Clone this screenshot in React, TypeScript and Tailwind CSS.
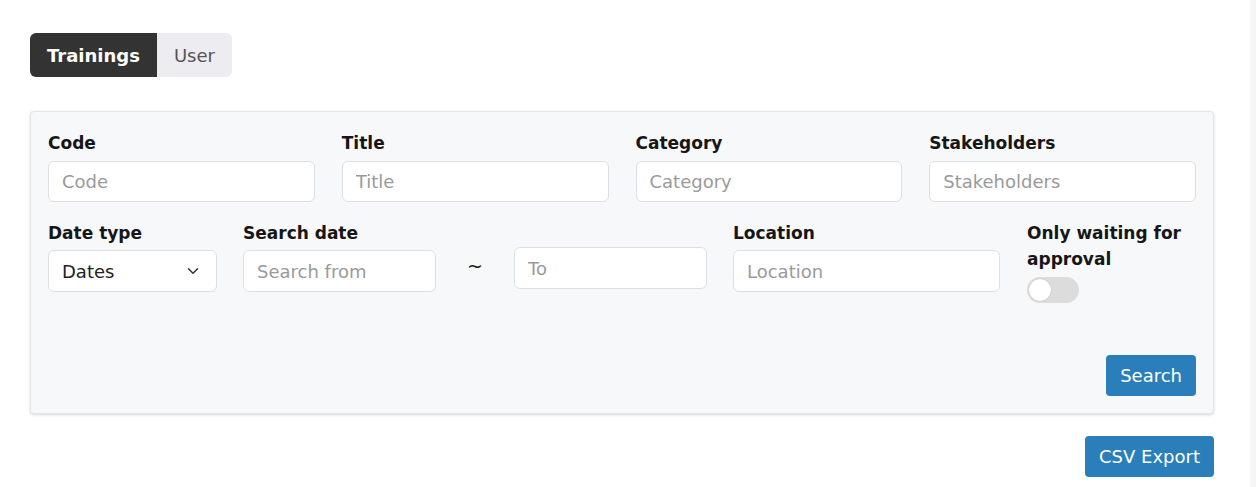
import React from "react";
import { ChevronDown } from "lucide-react";

const font = { fontFamily: '"DejaVu Sans", Verdana, sans-serif' };

function Field({ label, placeholder }: { label: string; placeholder: string }) {
  return (
    <div className="flex flex-col">
      <label className="text-[17px] font-bold leading-[26px] text-[#161616]">{label}</label>
      <input
        placeholder={placeholder}
        className="mt-[5px] h-[41px] w-full rounded-[6px] border border-[#dcdfe4] bg-white px-[13px] text-[18px] text-[#333] placeholder:text-[#9a9a9a] outline-none"
      />
    </div>
  );
}

export default function App() {
  return (
    <div className="flex min-h-[487px] bg-white" style={font}>
      <div className="flex-1 pl-[30px] pr-[36px] pt-[33px]">
        <div className="inline-flex h-[44px] overflow-hidden rounded-[6px]">
          <button className="bg-[#333333] px-[17px] text-[18px] font-bold text-white">Trainings</button>
          <button className="bg-[#ececf1] px-[17px] text-[18px] text-[#555]">User</button>
        </div>

        <div className="mt-[34px] rounded-[4px] border border-[#e3e5e9] bg-[#f7f8fa] px-[17px] pb-[17px] pt-[18px] shadow-[0_1px_3px_rgba(0,0,0,0.15)]">
          <div className="grid grid-cols-4 gap-x-[27px]">
            <Field label="Code" placeholder="Code" />
            <Field label="Title" placeholder="Title" />
            <Field label="Category" placeholder="Category" />
            <Field label="Stakeholders" placeholder="Stakeholders" />
          </div>

          <div className="mt-[18px] flex items-start">
            <div className="flex w-[169px] flex-col">
              <label className="text-[17px] font-bold leading-[26px] text-[#161616]">Date type</label>
              <div className="mt-[4px] flex h-[42px] items-center justify-between rounded-[6px] border border-[#dcdfe4] bg-white pl-[13px] pr-[14px]">
                <span className="text-[18px] text-[#222]">Dates</span>
                <ChevronDown size={18} strokeWidth={2} className="text-[#333]" />
              </div>
            </div>
            <div className="ml-[26px] flex w-[193px] flex-col">
              <label className="text-[17px] font-bold leading-[26px] text-[#161616]">Search date</label>
              <input
                placeholder="Search from"
                className="mt-[4px] h-[42px] w-full rounded-[6px] border border-[#dcdfe4] bg-white px-[13px] text-[18px] placeholder:text-[#9a9a9a] outline-none"
              />
            </div>
            <div className="flex h-[72px] w-[78px] items-end justify-center pb-[14px] text-[19px] leading-[24px] text-[#222]">~</div>
            <div className="mt-[27px] w-[193px]">
              <input
                placeholder="To"
                className="h-[42px] w-full rounded-[6px] border border-[#dcdfe4] bg-white px-[13px] text-[18px] placeholder:text-[#9a9a9a] outline-none"
              />
            </div>
            <div className="ml-[26px] flex w-[267px] flex-col">
              <label className="text-[17px] font-bold leading-[26px] text-[#161616]">Location</label>
              <input
                placeholder="Location"
                className="mt-[4px] h-[42px] w-full rounded-[6px] border border-[#dcdfe4] bg-white px-[13px] text-[18px] placeholder:text-[#9a9a9a] outline-none"
              />
            </div>
            <div className="ml-[27px] flex w-[169px] flex-col">
              <label className="text-[17px] font-bold leading-[26px] text-[#161616]">Only waiting for approval</label>
              <div className="mt-[5px] flex h-[26px] w-[52px] items-center rounded-full bg-[#dcdcdc] px-[2px]">
                <div className="h-[22px] w-[22px] rounded-full bg-white shadow-[0_0_1px_rgba(0,0,0,0.3)]" />
              </div>
            </div>
          </div>

          <div className="mt-[52px] flex justify-end">
            <button className="h-[41px] rounded-[4px] bg-[#2a7fba] px-[14px] text-[18px] text-white">Search</button>
          </div>
        </div>

        <div className="mt-[22px] flex justify-end">
          <button className="h-[41px] rounded-[4px] bg-[#2a7fba] px-[14px] text-[18px] text-white">CSV Export</button>
        </div>
      </div>
      <div className="w-[6px] bg-[#f6f6f6]" />
    </div>
  );
}
